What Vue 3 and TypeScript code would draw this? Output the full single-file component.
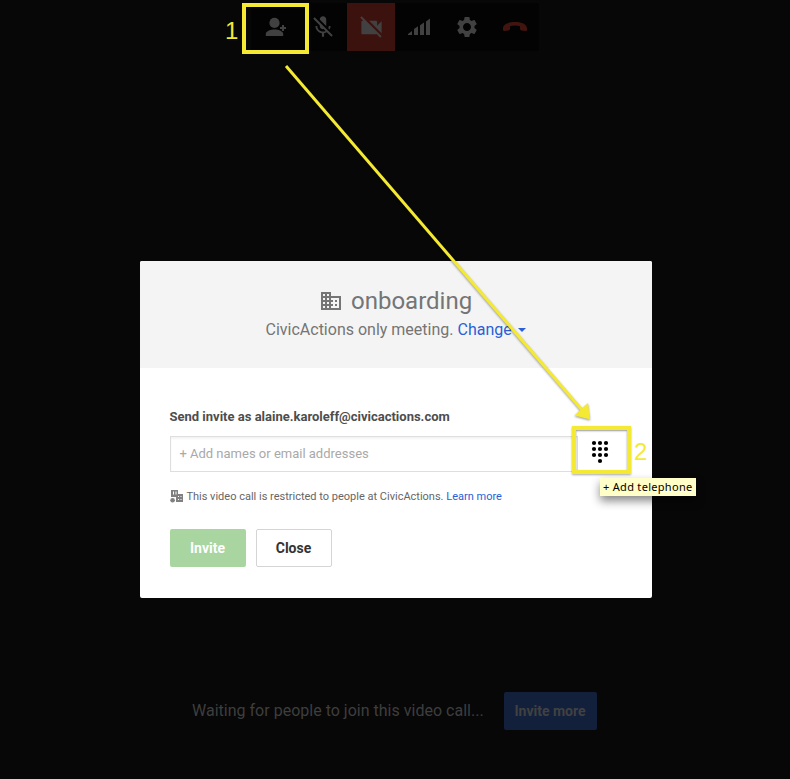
<script setup lang="ts">
interface Tool {
  name: string
  kind: 'person' | 'mic' | 'camera' | 'signal' | 'settings' | 'hangup'
}

const tools: Tool[] = [
  { name: 'Add people', kind: 'person' },
  { name: 'Mute', kind: 'mic' },
  { name: 'Camera off', kind: 'camera' },
  { name: 'Bandwidth', kind: 'signal' },
  { name: 'Settings', kind: 'settings' },
  { name: 'Hang up', kind: 'hangup' },
]
</script>

<template>
  <main class="call">
    <nav class="toolbar">
      <button v-for="tool in tools" :key="tool.kind" class="tool" :class="tool.kind" :aria-label="tool.name">
        <svg v-if="tool.kind === 'person'" width="24" height="24" viewBox="0 0 24 24">
          <circle cx="11.500" cy="7.900" r="5.100" />
          <path d="M2.800 21v-2.200c0-2.900 5.500-4.300 8.700-4.300s8.700 1.400 8.700 4.300V21zM19 10h2v2h2v2h-2v2h-2v-2h-2v-2h2z" />
        </svg>
        <svg v-else-if="tool.kind === 'mic'" width="26" height="26" viewBox="0 0 24 24">
          <path d="M19 11h-1.700c0 .74-.16 1.430-.430 2.050l1.230 1.230c.56-.98.9-2.090.9-3.280zm-4.020.17c0-.06.020-.11.020-.17V5c0-1.660-1.340-3-3-3S9 3.340 9 5v.18l5.980 5.990zM4.270 3L3 4.270l6.010 6.010V11c0 1.660 1.330 3 2.990 3 .22 0 .44-.03.65-.08l1.660 1.660c-.71.33-1.500.52-2.310.52-2.760 0-5.300-2.100-5.300-5.100H5c0 3.410 2.720 6.230 6 6.720V21h2v-3.280c.91-.13 1.770-.45 2.540-.9L19.730 21 21 19.730 4.270 3z" />
        </svg>
        <svg v-else-if="tool.kind === 'camera'" width="27" height="27" viewBox="0 0 24 24">
          <path d="M21 6.5l-4 4V7c0-.55-.45-1-1-1H9.82L21 17.18V6.5zM3.27 2L2 3.27 4.73 6H4c-.55 0-1 .45-1 1v10c0 .55.45 1 1 1h12c.21 0 .39-.08.54-.18L19.73 21 21 19.73 3.27 2z" />
        </svg>
        <svg v-else-if="tool.kind === 'signal'" width="24" height="24" viewBox="0 0 24 24">
          <path d="M1 20v-1l4-3v4zM7 20v-6l4-2.7V20zM13 20v-9.7l4-2.8V20zM19 20V6.5l4-3V20z" />
        </svg>
        <svg v-else-if="tool.kind === 'settings'" width="24" height="24" viewBox="0 0 24 24">
          <path d="M19.43 12.98c.04-.32.07-.64.07-.98s-.03-.66-.07-.98l2.11-1.65c.19-.15.24-.42.12-.64l-2-3.46c-.12-.22-.39-.3-.61-.22l-2.49 1c-.52-.4-1.08-.73-1.69-.98l-.38-2.65C14.46 2.18 14.25 2 14 2h-4c-.25 0-.46.18-.49.42l-.38 2.65c-.61.25-1.17.59-1.69.98l-2.49-1c-.23-.09-.49 0-.61.22l-2 3.46c-.13.22-.07.49.12.64l2.11 1.65c-.04.32-.07.65-.07.98s.03.66.07.98l-2.11 1.65c-.19.15-.24.42-.12.64l2 3.46c.12.22.39.3.61.22l2.49-1c.52.4 1.08.73 1.69.98l.38 2.65c.03.24.24.42.49.42h4c.25 0 .46-.18.49-.42l.38-2.65c.61-.25 1.17-.59 1.69-.98l2.49 1c.23.09.49 0 .61-.22l2-3.46c.12-.22.07-.49-.12-.64l-2.11-1.65zM12 16c-2.21 0-4-1.79-4-4s1.79-4 4-4 4 1.79 4 4-1.79 4-4 4z" />
        </svg>
        <svg v-else width="24" height="24" viewBox="0 0 24 24">
          <path d="M0 13.500C0 9.500 4.500 7 12 7s12 2.500 12 6.500v1.200q0 1.500-1.500 1.300l-4-.6q-1.500-.2-1.500-1.700v-2.500Q14.500 10.500 12 10.500t-5 .7v2.500q0 1.500-1.500 1.700l-4 .6Q0 16.200 0 14.700z" />
        </svg>
      </button>
    </nav>

    <section class="dialog">
      <header class="head">
        <h1>
          <svg class="building" width="22" height="20" viewBox="0 0 22 20">
            <path fill-rule="evenodd" d="M1 1h10v4h10v14H1zM3 3v2h2V3zM7 3v2h2V3zM3 7v2h2V7zM7 7v2h2V7zM3 11v2h2v-2zM7 11v2h2v-2zM3 15v2h2v-2zM7 15v2h2v-2zM11 7v2h2v2h-2v2h2v2h-2v2h8V7zM15 9h2v2h-2zM15 13h2v2h-2z" />
          </svg>
          <span>onboarding</span>
        </h1>
        <p class="scope">CivicActions only meeting. <a>Change<i class="caret"></i></a></p>
      </header>
      <div class="body">
        <h2><span>Send invite as alaine.karoleff@civicactions.com</span></h2>
        <div class="field">
          <div class="names"><span>+ Add names or email addresses</span></div>
          <button class="dial" aria-label="Add telephone">
            <svg width="18" height="24" viewBox="0 0 18 24">
              <g><circle cx="3" cy="3" r="2.100" /><circle cx="9" cy="3" r="2.100" /><circle cx="15" cy="3" r="2.100" /><circle cx="3" cy="9" r="2.100" /><circle cx="9" cy="9" r="2.100" /><circle cx="15" cy="9" r="2.100" /><circle cx="3" cy="15" r="2.100" /><circle cx="9" cy="15" r="2.100" /><circle cx="15" cy="15" r="2.100" /><circle cx="9" cy="21" r="2.100" /></g>
            </svg>
          </button>
        </div>
        <p class="note">
          <svg width="14" height="14" viewBox="0 0 14 14">
            <path fill-rule="evenodd" d="M1 1h7v4h5v8H6V8H1zM3 2.500v3h1v-3zM5.500 2.500v3h1v-3zM8 7v1h1V7zM10.500 7v1h1V7zM8 10v1h1v-1zM10.500 10v1h1v-1z" />
            <circle cx="2.600" cy="11.300" r="2.300" />
          </svg>
          <span>This video call is restricted to people at CivicActions. <a>Learn more</a></span>
        </p>
        <div class="actions">
          <button class="btn invite">Invite</button>
          <button class="btn close">Close</button>
        </div>
      </div>
    </section>

    <footer class="waiting">
      <span>Waiting for people to join this video call...</span>
      <button class="more">Invite more</button>
    </footer>

    <div class="mark first"></div>
    <span class="step one">1</span>
    <div class="mark second"></div>
    <span class="step two">2</span>
    <svg class="arrow" width="790" height="779" viewBox="0 0 790 779">
      <path d="M286 66L582 410" stroke="#f4e933" stroke-width="3" />
      <path d="M590 419.500L574.500 415.500L588 403z" fill="#f4e933" />
    </svg>
    <div class="tooltip"><span>+ Add telephone</span></div>
  </main>
</template>

<style>
body { background: #070707; }
</style>

<style scoped>
.call {
  position: relative;
  box-sizing: border-box;
  width: 790px;
  height: 779px;
  padding-top: 3px;
  display: flex;
  flex-direction: column;
  overflow: hidden;
  background: #070707;
  font-family: Roboto, "Liberation Sans", sans-serif;
}
h1, h2, p { margin: 0; font-weight: 400; }
button { margin: 0; padding: 0; border: 0; font-family: inherit; }
svg { display: block; flex: none; }
.toolbar {
  display: flex;
  width: 288px;
  height: 48px;
  margin-left: 251px;
  background: #030303;
  border-radius: 3px;
  overflow: hidden;
}
.tool {
  width: 48px;
  height: 48px;
  display: flex;
  align-items: center;
  justify-content: center;
  background: transparent;
  fill: #414141;
}
.camera { background: #3c120f; }
.hangup { fill: #42140f; }
.dialog {
  width: 512px;
  height: 337px;
  margin: 210px 0 0 140px;
  background: #fff;
  border-radius: 2px;
  overflow: hidden;
}
.head {
  box-sizing: border-box;
  height: 107px;
  padding-top: 24px;
  background: #f4f4f4;
  color: #757575;
}
h1 {
  display: flex;
  align-items: center;
  height: 32px;
  padding-left: 180px;
  gap: 9px;
  font-size: 24px;
}
.building { fill: #757575; }
.scope {
  padding: 1px 0 0 125.500px;
  height: 24px;
  line-height: 24px;
  font-size: 16px;
  white-space: nowrap;
}
a { color: #2a5fd8; }
.caret {
  display: inline-block;
  margin-left: 6px;
  vertical-align: 3px;
  border: 4px solid transparent;
  border-top-color: #2a5fd8;
  border-bottom: 0;
}
.body { padding: 38px 21px 0 30px; }
h2 {
  height: 20px;
  margin: 1px 0 0 -0.500px;
  line-height: 20px;
  font-size: 13px;
  font-weight: 700;
  color: #4d4d4d;
}
.field { display: flex; height: 36px; margin-top: 9px; }
.names {
  box-sizing: border-box;
  width: 408px;
  padding-left: 8.400px;
  border: 1px solid #dedede;
  box-shadow: inset 0 2px 2px #f4f4f4;
  line-height: 34px;
  font-size: 13px;
  color: #a9a9a9;
}
.dial {
  width: 53px;
  display: flex;
  align-items: center;
  padding-left: 13px;
  padding-bottom: 4px;
  background: #fff;
}
.note {
  display: flex;
  align-items: center;
  height: 20px;
  margin-top: 14px;
  gap: 2.400px;
  font-size: 11px;
  color: #666;
}
.note svg { fill: #808080; }
.actions { display: flex; gap: 10px; margin-top: 23px; }
.btn {
  box-sizing: border-box;
  width: 76px;
  height: 38px;
  border-radius: 2px;
  padding-right: 1px;
  font-size: 14px;
  font-weight: 700;
}
.invite { background: #a8d5a0; color: #fff; }
.close { background: #fff; border: 1px solid #d5d5d5; color: #333; }
.waiting {
  display: flex;
  align-items: center;
  justify-content: space-between;
  width: 405px;
  height: 38px;
  margin: 94px 0 0 192px;
  color: #3e3e3e;
  font-size: 16px;
}
.waiting span { padding-bottom: 2px; letter-spacing: 0.010px; }
.more {
  width: 93px;
  height: 38px;
  padding-right: 1px;
  border-radius: 2px;
  background: #12203c;
  color: #414141;
  font-size: 14px;
  font-weight: 700;
}
.mark {
  position: absolute;
  box-sizing: border-box;
  border: 4px solid #f4e933;
}
.first { left: 242px; top: 3px; width: 67px; height: 51px; }
.second { left: 572px; top: 426px; width: 59px; height: 48px; box-shadow: 0 1px 2px #0005, inset 0 1px 2px #0006; }
.step {
  position: absolute;
  font: 24px/28px "Liberation Sans", sans-serif;
  color: #f4e933;
}
.one { left: 225px; top: 17px; }
.two { left: 634px; top: 438px; }
.arrow { position: absolute; left: 0; top: 0; filter: drop-shadow(0 1px 1px #0006); }
.tooltip {
  position: absolute;
  left: 600px;
  top: 478px;
  box-sizing: border-box;
  width: 96px;
  height: 18px;
  padding-left: 3px;
  background: #ffffc7;
  box-shadow: 0 5px 10px #0007;
  color: #000;
  font: 11px/18px "Noto Sans", sans-serif;
  letter-spacing: 0.300px;
  white-space: nowrap;
}
</style>
